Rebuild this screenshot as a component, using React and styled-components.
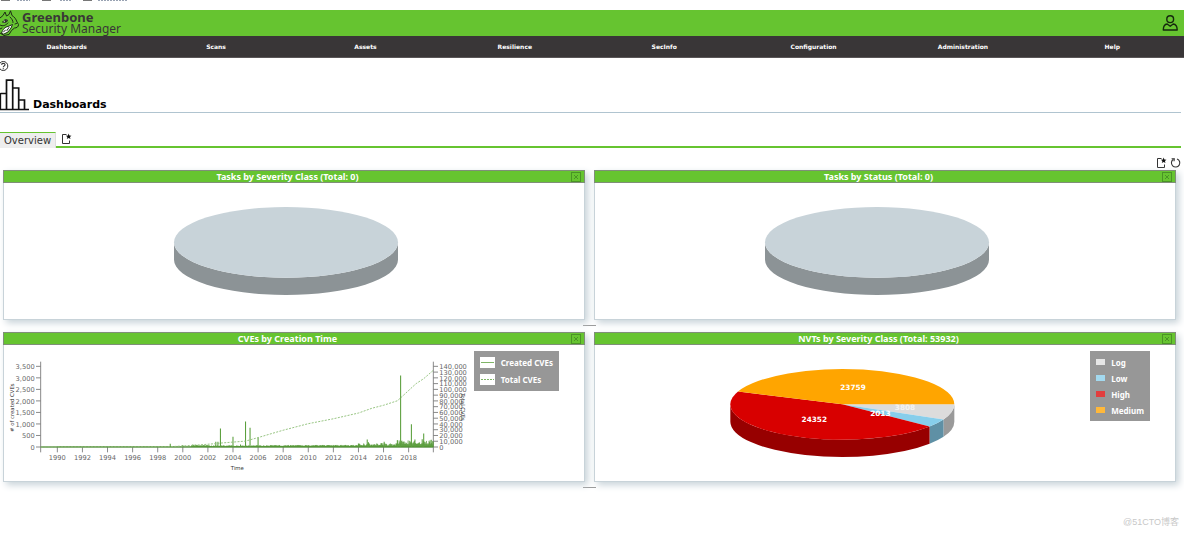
import React from "react";
import styled, { createGlobalStyle } from "styled-components";

const GREEN = "#66c430";
const INK = "#393637";
const MIST = "#c8d3d9";

const GlobalStyle = createGlobalStyle`
  * { box-sizing: border-box; }
  body {
    margin: 0;
    background: #fff;
    color: #111;
    font-family: "DejaVu Sans", Verdana, sans-serif;
    overflow-x: hidden;
  }
`;

const Page = styled.div`
  display: flex;
  flex-direction: column;
  min-height: 100vh;
  overflow: hidden;
`;

const BookmarkStrip = styled.div`
  height: 10px;
  svg { display: block; }
`;

const Header = styled.header`
  display: flex;
  align-items: center;
  justify-content: space-between;
  height: 26px;
  padding-right: 6px;
  background: ${GREEN};
`;

const Brand = styled.a`
  display: flex;
  align-items: center;
  gap: 2px;
  color: ${INK};
  text-decoration: none;
  svg { display: block; }
`;

const BrandName = styled.span`
  display: flex;
  flex-direction: column;
  font-family: "Noto Sans", "Open Sans", sans-serif;
  font-size: 12px;
  line-height: 12px;
`;

const BrandStrong = styled.strong`
  font-size: 13px;
  font-weight: 700;
`;

const IconButton = styled.button`
  display: block;
  padding: 0;
  border: 0;
  background: none;
  color: #111;
  cursor: pointer;
  svg { display: block; }
`;

const Nav = styled.nav`
  display: flex;
  height: 22px;
  margin: 0 -3px 0 -8px;
  background: ${INK};
  border-bottom: 1px solid #5a5657;
`;

const NavLink = styled.a`
  flex: 1;
  line-height: 22px;
  text-align: center;
  color: #fff;
  font-size: 6px;
  font-weight: 700;
  text-decoration: none;
`;

const Main = styled.main`
  padding-right: 3px;
`;

const HelpBar = styled.div`
  height: 20px;
  padding-top: 3px;
`;

const Section = styled.div`
  display: flex;
  align-items: flex-end;
  gap: 3px;
  height: 35px;
  margin-bottom: 19px;
  border-bottom: 1px solid #b0c4d0;
  svg { display: block; margin-bottom: 1px; }
`;

const SectionTitle = styled.h1`
  margin: 0;
  font-size: 11px;
  line-height: 14px;
  color: #000;
`;

const TabBar = styled.div`
  display: flex;
  height: 16px;
`;

const Tab = styled.button`
  padding: 0 4px;
  border: 0;
  border-top: 1px solid ${GREEN};
  border-right: 1px solid #ddd;
  background: #eee;
  color: #333;
  font: 10px/15px "DejaVu Sans", Verdana, sans-serif;
`;

const TabRest = styled.div`
  display: flex;
  flex: 1;
  align-items: center;
  padding-left: 5px;
  border-bottom: 2px solid ${GREEN};
`;

const Controls = styled.div`
  display: flex;
  justify-content: flex-end;
  gap: 3px;
  padding: 9px 0 1px;
`;

const Rows = styled.div`
  padding: 0 5px 0 3px;
`;

const Row = styled.div`
  display: grid;
  grid-template-columns: 1fr 1fr;
  gap: 9px;
`;

const ResizeHandle = styled.div`
  width: 13px;
  height: 1px;
  margin: 5px auto 6px;
  background: #999;
  cursor: row-resize;
`;

const Panel = styled.section`
  position: relative;
  box-shadow: 3px 3px 7px ${MIST};
  background: #fff;
`;

const PanelHeader = styled.div`
  display: flex;
  align-items: center;
  height: 13px;
  padding-right: 3px;
  border: 1px solid #7f8f78;
  background: ${GREEN};
`;

const PanelTitle = styled.h2`
  flex: 1;
  margin: 0;
  color: #fff;
  font-family: "Noto Sans", "Open Sans", sans-serif;
  font-size: 9px;
  line-height: 11px;
  text-align: center;
`;

const PanelBody = styled.div`
  border: 1px solid ${MIST};
  border-top: 0;
`;

const Chart = styled.svg`
  display: block;
  width: 100%;
  height: auto;
`;

const PieLabel = styled.text`
  fill: ${(p) => p.$color || "#fff"};
  font-size: 11px;
  font-weight: 700;
  text-anchor: middle;
`;

const TickLabel = styled.text`
  fill: #666;
  font-size: 10px;
  text-anchor: ${(p) => p.$anchor};
`;

const AxisTitle = styled.text`
  fill: #333;
  font-size: 8px;
  text-anchor: middle;
`;

const Legend = styled.ul`
  position: absolute;
  top: 19px;
  right: 26px;
  margin: 0;
  padding: 3px 6px;
  list-style: none;
  background: #979797;
  color: #fff;
`;

const LegendItem = styled.li`
  display: flex;
  align-items: center;
  gap: 6px;
  height: ${(p) => p.$height}px;
  font-family: "Noto Sans", "Open Sans", sans-serif;
  font-size: 8px;
  font-weight: 700;
`;

const Swatch = styled.span`
  width: 9px;
  height: 6px;
  background: ${(p) => p.$color};
`;

const LineSwatch = styled.svg`
  display: block;
  background: #fff;
`;

const Watermark = styled.footer`
  margin-top: auto;
  padding: 0 5px 4px;
  color: #c8c8c8;
  font: 9px/13px "Liberation Sans", "Noto Sans CJK SC", sans-serif;
  text-align: right;
`;

/* ---------- icons ---------- */

const Dragon = () => (
  <svg width="20" height="26" viewBox="0 0 20 26" fill="none" stroke="#1d2a17" strokeWidth="1" strokeLinejoin="round" strokeLinecap="round">
    <path d="M0 8 L3 5.500 L5 2 L6.500 6 L9 4.500 L10.500 .8 L12 5.500 C14.500 7 16 9 17 12 L18.500 14.500 C18.500 17 16.500 18 14.500 18 L11.500 20.500 L9 24.500 L4 25.500 L0 23" fill="#66c430" />
    <path d="M1.500 23 C3 19 5 17 8 16.500 L12.500 14.500 L11 18 L8 22 L4 24 Z" fill="#fff" />
    <path d="M3.500 22 L5.500 20 M7 20.500 L9 17.500" />
    <path d="M3 12 C4 9.500 6 9 7.500 10 C7.500 12 5 13.500 3 12 Z" fill="#fff" />
    <circle cx="5.600" cy="11" r=".8" fill="#1d2a17" />
    <path d="M0 15 C3 17 6 15 8 13 M10 7 C12 9 13 10.500 13 12.500 M15 14 L16.500 13.500 M0 19 L2 18" />
  </svg>
);

const UserIcon = () => (
  <svg width="16" height="16" viewBox="0 0 16 16" fill="none" stroke="#16290e" strokeWidth="1.400" strokeLinejoin="round">
    <circle cx="8.200" cy="4.200" r="3.400" />
    <path d="M5.200 9 C2.500 9.300 1.300 11 1.300 15 H15.200 C15.200 11 14 9.300 11.200 9 L8.200 11.300 Z" />
  </svg>
);

const HelpIcon = () => (
  <svg width="9" height="11" viewBox="0 0 9 11" fill="none" stroke="#333" strokeWidth="1">
    <circle cx="3.300" cy="5" r="4.500" />
    <path d="M1.600 3.800 C1.600 1.800 5 1.800 5 3.700 C5 4.900 3.300 4.900 3.300 6.300" strokeWidth="1.200" />
    <path d="M3.300 7.200 V8.300" strokeWidth="1.200" />
  </svg>
);

const DashboardIcon = () => (
  <svg width="30" height="32" viewBox="0 0 30 32" fill="none" stroke="#111" strokeWidth="1.700">
    <path d="M0 30.500 H29 M.5 14.500 H6.500 M6.500 30 V1.200 H12.700 V30 M12.700 9 H18.700 V30 M18.700 21 H24.500 V30 M.3 14 V30" />
  </svg>
);

const NewIcon = () => (
  <svg width="11" height="12" viewBox="0 0 11 12" fill="none" stroke="#333" strokeWidth="1">
    <path d="M5.500 1.500 H1.500 V10.500 H8.500 V7.500" />
    <path d="M7.600 .6 L8.400 2.600 L10.500 2.700 L8.900 4 L9.500 6.100 L7.600 4.900 L5.800 6.100 L6.400 4 L4.800 2.700 L6.900 2.600 Z" fill="#111" stroke="none" />
  </svg>
);

const ResetIcon = () => (
  <svg width="11" height="12" viewBox="0 0 11 12" fill="none" stroke="#333" strokeWidth="1.100">
    <path d="M3.400 2.300 A4.200 4.200 0 1 0 7 1.900" />
    <path d="M1.600 1.800 L4.300 1.800 L4 4.300" />
  </svg>
);

const CloseIcon = () => (
  <svg width="10" height="10" viewBox="0 0 10 10" fill="none" stroke="#4a9426" strokeWidth="1">
    <rect x=".5" y=".5" width="9" height="9" />
    <path d="M3 3 L7 7 M7 3 L3 7" />
  </svg>
);

/* ---------- charts ---------- */

const RX = 168;
const RY = 53;
const DEPTH = 26;
const CY = 89;

const at = (cx, deg) => {
  const a = (deg * Math.PI) / 180;
  return [cx + RX * Math.cos(a), CY + RY * Math.sin(a)];
};

const topPath = (cx, from, to) => {
  const [x1, y1] = at(cx, from);
  const [x2, y2] = at(cx, to);
  return `M${cx} ${CY} L${x1} ${y1} A${RX} ${RY} 0 ${to - from > 180 ? 1 : 0} 1 ${x2} ${y2} Z`;
};

const sidePath = (cx, from, to) => {
  const [x1, y1] = at(cx, from);
  const [x2, y2] = at(cx, Math.min(to, 180));
  return `M${x1} ${y1} A${RX} ${RY} 0 0 1 ${x2} ${y2} V${y2 + DEPTH} A${RX} ${RY} 0 0 0 ${x1} ${y1 + DEPTH} Z`;
};

const EmptyPie = () => (
  <Chart viewBox="0 0 870 204" role="img" aria-label="No data">
    <path d={sidePath(423, 0, 180)} fill="#8c9396" />
    <ellipse cx="423" cy={CY} rx={RX} ry={RY} fill={MIST} />
  </Chart>
);

const NVTS = [
  { name: "Log", value: 3808, top: "#dcdcdc", side: "#9a9a9a", legend: "#e6e6e6", x: 465, y: 98, label: "#f4f4f4" },
  { name: "Low", value: 2013, top: "#87ceeb", side: "#5f90a5", legend: "#a3d9ef", x: 428, y: 107 },
  { name: "High", value: 24352, top: "#d80000", side: "#970000", legend: "#e23d3d", x: 329, y: 116 },
  { name: "Medium", value: 23759, top: "#ffa500", side: "#b27300", legend: "#ffb83a", x: 387, y: 67 },
];

const NvtPie = () => {
  const total = NVTS.reduce((sum, s) => sum + s.value, 0);
  let angle = 0;
  const slices = NVTS.map((s) => {
    const from = angle;
    angle += (s.value / total) * 360;
    return { ...s, from, to: angle };
  });
  return (
    <>
      <Chart viewBox="0 0 870 204" role="img" aria-label="NVTs by Severity Class">
        {slices.filter((s) => s.from < 180).map((s) => (
          <path key={s.name} d={sidePath(371, s.from, s.to)} fill={s.side} />
        ))}
        {slices.map((s) => (
          <path key={s.name} d={topPath(371, s.from, s.to)} fill={s.top} />
        ))}
        {slices.map((s) => (
          <PieLabel key={s.name} x={s.x} y={s.y} $color={s.label}>{s.value}</PieLabel>
        ))}
      </Chart>
      <Legend>
        {NVTS.map((s) => (
          <LegendItem key={s.name} $height={16}>
            <Swatch $color={s.legend} />
            {s.name}
          </LegendItem>
        ))}
      </Legend>
    </>
  );
};

const LEFT = 55;
const RIGHT = 644;
const BASE = 153;
const TOP = 25;
const yearX = (year) => 80 + (year - 1990) * 18.82;
const createdY = (n) => BASE - (n / 3500) * 121;
const totalY = (n) => BASE - (n / 140000) * 121;

const SPIKES = [
  [1997, 40], [1999, 140], [2000, 90], [2000.8, 110], [2001, 100], [2002, 90],
  [2002.63, 230], [2002.8, 230], [2003, 800], [2004, 450], [2004.6, 110], [2005, 1110],
  [2005.36, 840], [2006, 400], [2014, 150], [2014.7, 330], [2014.8, 210], [2016.05, 230],
  [2017.1, 290], [2017.36, 3100], [2018.22, 990], [2018.5, 330], [2019.08, 340], [2019.2, 590], [2019.8, 310],
];

const noiseAt = (year, i) => {
  const r = Math.abs((Math.sin(i * 12.9898) * 43758.5453) % 1);
  if (year < 2000.7) return 10;
  if (year < 2002.2) return 40 + r * 50;
  if (year < 2007) return 25 + r * 50;
  if (year < 2014) return 40 + r * 50;
  if (year < 2017) return 60 + r * r * 110;
  return 115 + r * r * 190;
};

const NOISE = Array.from({ length: 720 }, (_, i) => {
  const year = 1990 + i / 24;
  return [year, noiseAt(year, i)];
});

const TOTALS = [
  [1988.7, 0], [1999, 400], [2001, 2200], [2002.7, 4200], [2003, 4800], [2004, 6000],
  [2005, 7200], [2006, 11500], [2007.1, 16500], [2008, 20500], [2010, 28500], [2012, 34500],
  [2014, 41500], [2015.1, 47500], [2016, 51000], [2017.1, 56500], [2017.5, 62000],
  [2018.1, 70500], [2018.6, 77500], [2019.2, 83500], [2019.95, 93500],
].map(([year, n]) => [year, n * 1.42]);

const CveChart = () => {
  const bars = (data) => data.map(([year, n]) => `M${yearX(year)} ${BASE} V${createdY(n)}`).join(" ");
  return (
    <>
      <Chart viewBox="0 0 870 204" role="img" aria-label="CVEs by Creation Time">
        <g fill="none" stroke="#777" strokeWidth="1.300">
          <path d={`M${LEFT} ${TOP} V${BASE + 8} M${LEFT} ${BASE} H${RIGHT} M${RIGHT} ${TOP} V${BASE + 8}`} />
          {Array.from({ length: 8 }, (_, i) => (
            <path key={i} d={`M${LEFT - 7} ${createdY(i * 500)} H${LEFT}`} />
          ))}
          {Array.from({ length: 15 }, (_, i) => (
            <path key={i} d={`M${RIGHT} ${totalY(i * 10000)} H${RIGHT + 7} M${yearX(1990 + i * 2)} ${BASE} V${BASE + 8}`} />
          ))}
        </g>
        {Array.from({ length: 8 }, (_, i) => (
          <TickLabel key={i} x={LEFT - 9} y={createdY(i * 500) + 4} $anchor="end">{(i * 500).toLocaleString("en-US")}</TickLabel>
        ))}
        {Array.from({ length: 15 }, (_, i) => (
          <TickLabel key={i} x={RIGHT + 9} y={totalY(i * 10000) + 4} $anchor="start">{(i * 10000).toLocaleString("en-US")}</TickLabel>
        ))}
        {Array.from({ length: 15 }, (_, i) => (
          <TickLabel key={i} x={yearX(1990 + i * 2)} y={173} $anchor="middle">{1990 + i * 2}</TickLabel>
        ))}
        <AxisTitle x="350" y="187">Time</AxisTitle>
        <AxisTitle transform="translate(15 94) rotate(-90)"># of created CVEs</AxisTitle>
        <AxisTitle transform="translate(686 93) rotate(90)">Total CVEs</AxisTitle>
        <path d={`M${LEFT} ${BASE} H${RIGHT}`} stroke="#4f9a30" strokeWidth="1.500" />
        <path d={bars(NOISE)} stroke="#4f9530" strokeWidth="1.200" />
        <path d={bars(SPIKES)} stroke="#5b9f3d" strokeWidth="1.600" />
        <polyline
          points={TOTALS.map(([year, n]) => `${yearX(year)},${totalY(n)}`).join(" ")}
          fill="none"
          stroke="#8fc078"
          strokeWidth="1.400"
          strokeDasharray="3 2"
        />
      </Chart>
      <Legend>
        <LegendItem $height={17}>
          <LineSwatch width="15" height="11"><path d="M1 5.500 H14" stroke="#7fb566" /></LineSwatch>
          Created CVEs
        </LegendItem>
        <LegendItem $height={17}>
          <LineSwatch width="15" height="11"><path d="M1 5.500 H14" stroke="#7fb566" strokeDasharray="2 1" /></LineSwatch>
          Total CVEs
        </LegendItem>
      </Legend>
    </>
  );
};

const DashboardPanel = ({ title, children }) => (
  <Panel>
    <PanelHeader>
      <PanelTitle>{title}</PanelTitle>
      <IconButton aria-label="Remove display"><CloseIcon /></IconButton>
    </PanelHeader>
    <PanelBody>{children}</PanelBody>
  </Panel>
);

const MENU = ["Dashboards", "Scans", "Assets", "Resilience", "SecInfo", "Configuration", "Administration", "Help"];

export default function App() {
  return (
    <Page>
      <GlobalStyle />
      <BookmarkStrip>
        <svg width="130" height="2" fill="none">
          <path d="M1 .5 H10 M42 .5 H51 M83 .5 H92" stroke="#777" />
          <path d="M17 .5 H30 M60 .5 H71 M98 .5 H127" stroke="#99a3b3" strokeDasharray="2 1" />
        </svg>
      </BookmarkStrip>
      <Header>
        <Brand href="#home">
          <Dragon />
          <BrandName>
            <BrandStrong>Greenbone</BrandStrong>
            <span>Security Manager</span>
          </BrandName>
        </Brand>
        <IconButton aria-label="User"><UserIcon /></IconButton>
      </Header>
      <Nav>
        {MENU.map((item) => (
          <NavLink key={item} href={`#${item.toLowerCase()}`}>{item}</NavLink>
        ))}
      </Nav>
      <Main>
        <HelpBar>
          <IconButton aria-label="Help"><HelpIcon /></IconButton>
        </HelpBar>
        <Section>
          <DashboardIcon />
          <SectionTitle>Dashboards</SectionTitle>
        </Section>
        <TabBar>
          <Tab>Overview</Tab>
          <TabRest>
            <IconButton aria-label="Add dashboard"><NewIcon /></IconButton>
          </TabRest>
        </TabBar>
        <Controls>
          <IconButton aria-label="Add display"><NewIcon /></IconButton>
          <IconButton aria-label="Reset displays"><ResetIcon /></IconButton>
        </Controls>
        <Rows>
          <Row>
            <DashboardPanel title="Tasks by Severity Class (Total: 0)"><EmptyPie /></DashboardPanel>
            <DashboardPanel title="Tasks by Status (Total: 0)"><EmptyPie /></DashboardPanel>
          </Row>
          <ResizeHandle />
          <Row>
            <DashboardPanel title="CVEs by Creation Time"><CveChart /></DashboardPanel>
            <DashboardPanel title="NVTs by Severity Class (Total: 53932)"><NvtPie /></DashboardPanel>
          </Row>
          <ResizeHandle />
        </Rows>
      </Main>
      <Watermark>@51CTO博客</Watermark>
    </Page>
  );
}
